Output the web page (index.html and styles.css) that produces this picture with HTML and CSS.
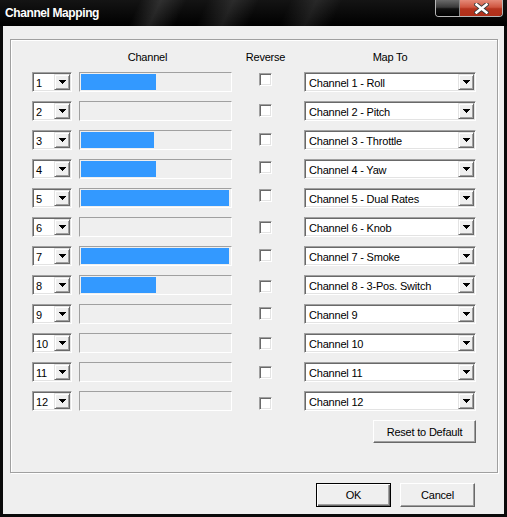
FILE: index.html
```html
<!DOCTYPE html>
<html>
<head>
<meta charset="utf-8">
<title>Channel Mapping</title>
<link rel="stylesheet" href="styles.css">
</head>
<body>
<div class="window">
  <div class="titlebar">
    <span class="title">Channel Mapping</span>
    <div class="caption">
      <span class="cap-gray"></span>
      <span class="cap-close">
        <svg width="15" height="11" viewBox="0 0 15 11"><path d="M2.5 1.5 L12.5 9.5 M12.5 1.5 L2.5 9.5" stroke="#3a3a3a" stroke-width="4.4" stroke-linecap="square"/><path d="M2.5 1.5 L12.5 9.5 M12.5 1.5 L2.5 9.5" stroke="#fff" stroke-width="2.6" stroke-linecap="square"/></svg>
      </span>
    </div>
  </div>
  <div class="client">
    <div class="group">
      <div class="grid">
        <div class="hd hd-blank"></div>
        <div class="hd hd-channel">Channel</div>
        <div class="hd hd-reverse">Reverse</div>
        <div class="hd hd-map">Map To</div>

        <div class="row r1"><div class="spin"><span class="val">1</span><span class="dd"><svg width="7" height="4" viewBox="0 0 7 4"><path d="M0 0H7V1H6V2H5V3H4V4H3V3H2V2H1V1H0Z"/></svg></span></div><div class="bar"><div class="fill" style="width:75px"></div></div><span class="check"></span><div class="combo"><span class="val">Channel 1 - Roll</span><span class="dd"><svg width="7" height="4" viewBox="0 0 7 4"><path d="M0 0H7V1H6V2H5V3H4V4H3V3H2V2H1V1H0Z"/></svg></span></div></div>

        <div class="row r2"><div class="spin"><span class="val">2</span><span class="dd"><svg width="7" height="4" viewBox="0 0 7 4"><path d="M0 0H7V1H6V2H5V3H4V4H3V3H2V2H1V1H0Z"/></svg></span></div><div class="bar"><div class="fill" style="width:0px"></div></div><span class="check"></span><div class="combo"><span class="val">Channel 2 - Pitch</span><span class="dd"><svg width="7" height="4" viewBox="0 0 7 4"><path d="M0 0H7V1H6V2H5V3H4V4H3V3H2V2H1V1H0Z"/></svg></span></div></div>

        <div class="row r3"><div class="spin"><span class="val">3</span><span class="dd"><svg width="7" height="4" viewBox="0 0 7 4"><path d="M0 0H7V1H6V2H5V3H4V4H3V3H2V2H1V1H0Z"/></svg></span></div><div class="bar"><div class="fill" style="width:73px"></div></div><span class="check"></span><div class="combo"><span class="val">Channel 3 - Throttle</span><span class="dd"><svg width="7" height="4" viewBox="0 0 7 4"><path d="M0 0H7V1H6V2H5V3H4V4H3V3H2V2H1V1H0Z"/></svg></span></div></div>

        <div class="row r4"><div class="spin"><span class="val">4</span><span class="dd"><svg width="7" height="4" viewBox="0 0 7 4"><path d="M0 0H7V1H6V2H5V3H4V4H3V3H2V2H1V1H0Z"/></svg></span></div><div class="bar"><div class="fill" style="width:75px"></div></div><span class="check"></span><div class="combo"><span class="val">Channel 4 - Yaw</span><span class="dd"><svg width="7" height="4" viewBox="0 0 7 4"><path d="M0 0H7V1H6V2H5V3H4V4H3V3H2V2H1V1H0Z"/></svg></span></div></div>

        <div class="row r5"><div class="spin"><span class="val">5</span><span class="dd"><svg width="7" height="4" viewBox="0 0 7 4"><path d="M0 0H7V1H6V2H5V3H4V4H3V3H2V2H1V1H0Z"/></svg></span></div><div class="bar"><div class="fill" style="width:148px"></div></div><span class="check"></span><div class="combo"><span class="val">Channel 5 - Dual Rates</span><span class="dd"><svg width="7" height="4" viewBox="0 0 7 4"><path d="M0 0H7V1H6V2H5V3H4V4H3V3H2V2H1V1H0Z"/></svg></span></div></div>

        <div class="row r6"><div class="spin"><span class="val">6</span><span class="dd"><svg width="7" height="4" viewBox="0 0 7 4"><path d="M0 0H7V1H6V2H5V3H4V4H3V3H2V2H1V1H0Z"/></svg></span></div><div class="bar"><div class="fill" style="width:0px"></div></div><span class="check"></span><div class="combo"><span class="val">Channel 6 - Knob</span><span class="dd"><svg width="7" height="4" viewBox="0 0 7 4"><path d="M0 0H7V1H6V2H5V3H4V4H3V3H2V2H1V1H0Z"/></svg></span></div></div>

        <div class="row r7"><div class="spin"><span class="val">7</span><span class="dd"><svg width="7" height="4" viewBox="0 0 7 4"><path d="M0 0H7V1H6V2H5V3H4V4H3V3H2V2H1V1H0Z"/></svg></span></div><div class="bar"><div class="fill" style="width:148px"></div></div><span class="check"></span><div class="combo"><span class="val">Channel 7 - Smoke</span><span class="dd"><svg width="7" height="4" viewBox="0 0 7 4"><path d="M0 0H7V1H6V2H5V3H4V4H3V3H2V2H1V1H0Z"/></svg></span></div></div>

        <div class="row r8"><div class="spin"><span class="val">8</span><span class="dd"><svg width="7" height="4" viewBox="0 0 7 4"><path d="M0 0H7V1H6V2H5V3H4V4H3V3H2V2H1V1H0Z"/></svg></span></div><div class="bar"><div class="fill" style="width:75px"></div></div><span class="check"></span><div class="combo"><span class="val">Channel 8 - 3-Pos. Switch</span><span class="dd"><svg width="7" height="4" viewBox="0 0 7 4"><path d="M0 0H7V1H6V2H5V3H4V4H3V3H2V2H1V1H0Z"/></svg></span></div></div>

        <div class="row r9"><div class="spin"><span class="val">9</span><span class="dd"><svg width="7" height="4" viewBox="0 0 7 4"><path d="M0 0H7V1H6V2H5V3H4V4H3V3H2V2H1V1H0Z"/></svg></span></div><div class="bar"><div class="fill" style="width:0px"></div></div><span class="check"></span><div class="combo"><span class="val">Channel 9</span><span class="dd"><svg width="7" height="4" viewBox="0 0 7 4"><path d="M0 0H7V1H6V2H5V3H4V4H3V3H2V2H1V1H0Z"/></svg></span></div></div>

        <div class="row r10"><div class="spin"><span class="val">10</span><span class="dd"><svg width="7" height="4" viewBox="0 0 7 4"><path d="M0 0H7V1H6V2H5V3H4V4H3V3H2V2H1V1H0Z"/></svg></span></div><div class="bar"><div class="fill" style="width:0px"></div></div><span class="check"></span><div class="combo"><span class="val">Channel 10</span><span class="dd"><svg width="7" height="4" viewBox="0 0 7 4"><path d="M0 0H7V1H6V2H5V3H4V4H3V3H2V2H1V1H0Z"/></svg></span></div></div>

        <div class="row r11"><div class="spin"><span class="val">11</span><span class="dd"><svg width="7" height="4" viewBox="0 0 7 4"><path d="M0 0H7V1H6V2H5V3H4V4H3V3H2V2H1V1H0Z"/></svg></span></div><div class="bar"><div class="fill" style="width:0px"></div></div><span class="check"></span><div class="combo"><span class="val">Channel 11</span><span class="dd"><svg width="7" height="4" viewBox="0 0 7 4"><path d="M0 0H7V1H6V2H5V3H4V4H3V3H2V2H1V1H0Z"/></svg></span></div></div>

        <div class="row r12"><div class="spin"><span class="val">12</span><span class="dd"><svg width="7" height="4" viewBox="0 0 7 4"><path d="M0 0H7V1H6V2H5V3H4V4H3V3H2V2H1V1H0Z"/></svg></span></div><div class="bar"><div class="fill" style="width:0px"></div></div><span class="check"></span><div class="combo"><span class="val">Channel 12</span><span class="dd"><svg width="7" height="4" viewBox="0 0 7 4"><path d="M0 0H7V1H6V2H5V3H4V4H3V3H2V2H1V1H0Z"/></svg></span></div></div>

        <div class="reset-row"><button class="btn btn-reset">Reset to Default</button></div>
      </div>
    </div>
    <div class="actions">
      <button class="btn btn-default">OK</button>
      <button class="btn">Cancel</button>
    </div>
  </div>
</div>
</body>
</html>
```

FILE: styles.css
```css
* { box-sizing: border-box; }
html, body { margin: 0; padding: 0; background: #000; }
body {
  font-family: "Liberation Sans", Arial, sans-serif;
  font-size: 11px;
  letter-spacing: -0.2px;
  color: #000;
}
.window {
  width: 507px;
  height: 517px;
  background: #0a0a0a;
  display: flex;
  flex-direction: column;
  padding: 0 3px 3px 3px;
  overflow: hidden;
}
.titlebar {
  height: 26px;
  flex: none;
  margin: 0 -3px;
  padding: 0 4px 0 5px;
  display: flex;
  justify-content: space-between;
  align-items: flex-start;
  background:
    linear-gradient(115deg, rgba(0,0,0,0) 0%, rgba(0,0,0,0) 27%, rgba(255,255,255,0.12) 31%, rgba(0,0,0,0) 36%, rgba(0,0,0,0) 40%, rgba(255,255,255,0.10) 45%, rgba(0,0,0,0) 50%, rgba(0,0,0,0) 56%, rgba(255,255,255,0.09) 61%, rgba(0,0,0,0) 66%, rgba(0,0,0,0) 100%),
    linear-gradient(#141414, #000);
}
.title {
  color: #fff;
  font-weight: bold;
  font-size: 12px;
  line-height: 26px;
  letter-spacing: -0.4px;
}
.caption {
  display: flex;
  height: 17px;
  border: 1px solid #b8b8b8;
  border-top: none;
  border-radius: 0 0 4px 4px;
  overflow: hidden;
}
.cap-gray {
  width: 23px;
  background: linear-gradient(#6a6a6a, #3a3a3a 45%, #111 55%, #000);
}
.cap-close {
  width: 43px;
  border-left: 1px solid #8a8a8a;
  background: linear-gradient(#e58a78, #cf5640 45%, #b5341e 55%, #b0301a);
  display: flex;
  align-items: center;
  justify-content: center;
}
.client {
  flex: 1;
  background: #efefef;
  padding: 13px 0 0 7px;
  display: flex;
  flex-direction: column;
}
.group {
  width: 488px;
  height: 434px;
  border: 1px solid #a0a0a0;
  box-shadow: inset 1px 1px #fff, 1px 1px #fff;
  padding: 11px 0 0 21px;
}
.grid {
  display: grid;
  grid-template-columns: 47px 180px 45px 172px;
  grid-template-rows: 12px;
  grid-auto-rows: 20px;
  row-gap: 9px;
  align-items: start;
}
.hd { line-height: 12px; height: 12px; white-space: nowrap; }
.hd-channel { width: 153px; display: flex; justify-content: center; padding-right: 16px; }
.hd-reverse { width: 13px; display: flex; justify-content: center; }
.hd-map { display: flex; justify-content: center; }
.row { display: contents; }

.spin, .combo {
  height: 20px;
  display: flex;
  background: #fff;
  border: 1px solid;
  border-color: #a0a0a0 #fff #fff #a0a0a0;
  box-shadow: inset 1px 1px #696969, inset -1px -1px #e3e3e3;
  padding: 1px;
}
.spin { width: 40px; }
.combo { width: 172px; }
.val {
  flex: 1;
  line-height: 18px;
  height: 16px;
  padding-left: 2px;
  white-space: nowrap;
  overflow: visible;
}
.combo .val { padding-left: 3px; }
.dd {
  width: 16px;
  height: 16px;
  flex: none;
  background: #efefef;
  border: 1px solid;
  border-color: #e3e3e3 #696969 #696969 #e3e3e3;
  box-shadow: inset 1px 1px #fff, inset -1px -1px #a0a0a0;
  display: flex;
  align-items: center;
  justify-content: center;
}
.dd svg { display: block; shape-rendering: crispEdges; }
.bar {
  width: 153px;
  height: 20px;
  border: 1px solid;
  border-color: #a0a0a0 #fff #fff #a0a0a0;
  padding: 1px;
}
.fill { height: 100%; background: #3399ff; }
.check {
  width: 13px;
  height: 13px;
  background: #fff;
  border: 1px solid;
  border-color: #a0a0a0 #fff #fff #a0a0a0;
  box-shadow: inset 1px 1px #696969, inset -1px -1px #e3e3e3;
}
.r1 .check { margin-top: 1px; }
.r2 .check { margin-top: 3px; }
.r3 .check { margin-top: 3px; }
.r4 .check { margin-top: 2px; }
.r5 .check { margin-top: 1px; }
.r6 .check { margin-top: 4px; }
.r7 .check { margin-top: 3px; }
.r8 .check { margin-top: 5px; }
.r9 .check { margin-top: 3px; }
.r10 .check { margin-top: 4px; }
.r11 .check { margin-top: 4px; }
.r12 .check { margin-top: 6px; }

.reset-row { grid-column: 4; display: flex; justify-content: flex-end; }
.btn {
  width: 75px;
  height: 24px;
  font: inherit;
  letter-spacing: inherit;
  color: #000;
  background: #efefef;
  border: 1px solid;
  border-color: #fff #696969 #696969 #fff;
  box-shadow: inset -1px -1px #a0a0a0;
  padding: 0;
}
.btn-reset { width: 103px; height: 23px; }
.btn-default {
  border: 1px solid #000;
  box-shadow: inset 1px 1px #fff, inset -1px -1px #696969, inset -2px -2px #a0a0a0;
}
.actions {
  display: flex;
  justify-content: flex-end;
  gap: 9px;
  margin-top: 10px;
  padding-right: 29px;
}
```
